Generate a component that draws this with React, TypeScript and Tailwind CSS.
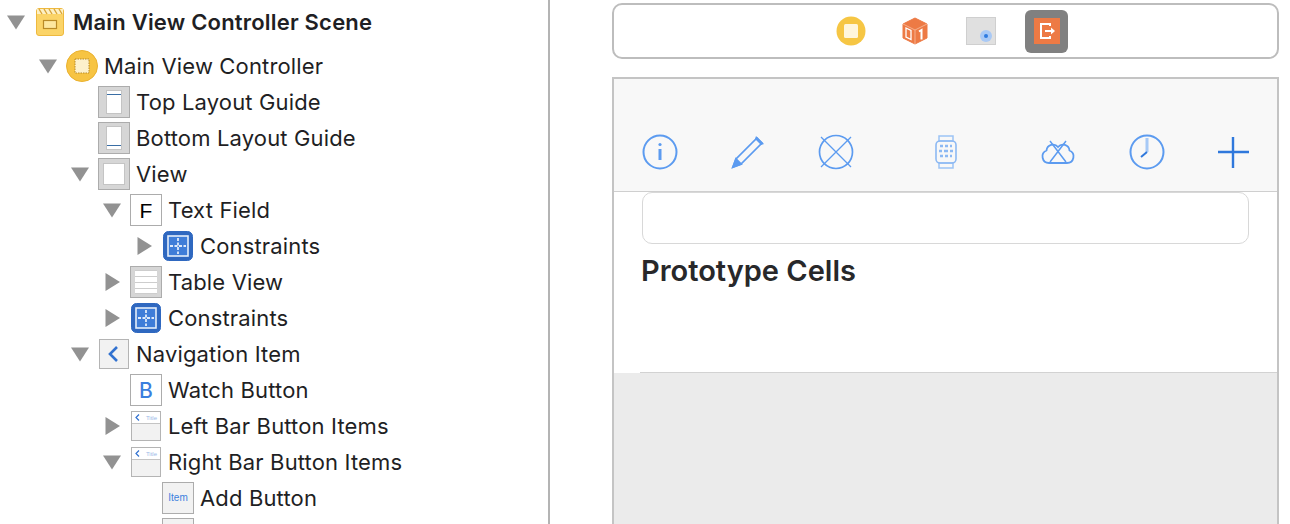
import type { ReactNode } from "react";

const boxClass = "flex h-8 w-8 items-center justify-center border border-[#acacac]";

function Triangle({ open }: { open: boolean }) {
	return (
		<svg width="18" height="18" viewBox="0 0 18 18" className="shrink-0">
			{open ? <path d="M0 2.5h18L9 16.5z" fill="#929292" /> : <path d="M2.5 0v18L17 9z" fill="#929292" />}
		</svg>
	);
}

function SceneIcon() {
	return (
		<svg width="28" height="28" viewBox="0 0 28 28">
			<rect x="0.5" y="0.5" width="27" height="27" rx="2.5" fill="#fbd468" stroke="#eeb93f" />
			<rect x="1" y="1" width="26" height="5" fill="#fdf0c4" />
			<path d="M3 1l3 5M8 1l3 5M13 1l3 5M18 1l3 5M23 1l3 5" stroke="#d9a53a" strokeWidth="1.4" />
			<rect x="7.5" y="12.5" width="13" height="8" fill="#fde79f" stroke="#b98a26" strokeWidth="1.2" />
		</svg>
	);
}

function ControllerIcon() {
	return (
		<svg width="32" height="32" viewBox="0 0 32 32">
			<circle cx="16" cy="16" r="15.5" fill="#f7c443" stroke="#eab12f" />
			<rect x="9" y="9" width="14" height="14" fill="#fdf1cc" stroke="#b98a26" strokeDasharray="1.5 1" />
		</svg>
	);
}

function SmallControllerIcon() {
	return (
		<svg width="30" height="30" viewBox="0 0 30 30">
			<circle cx="15" cy="15" r="14.5" fill="#f6c644" />
			<rect x="8" y="8" width="14" height="14" rx="1.5" fill="#fff6dc" />
		</svg>
	);
}

function GuideIcon({ bottom }: { bottom?: boolean }) {
	return (
		<div className={`${boxClass} bg-[#d6d6d6]`}>
			<svg width="16" height="24" viewBox="0 0 16 24">
				<rect x="0.5" y="0.5" width="15" height="23" fill="#ffffff" stroke="#c4c4c4" />
				<rect x="1" y={bottom ? 19 : 4} width="14" height="1" fill="#3a6ea5" />
			</svg>
		</div>
	);
}

function ViewIcon() {
	return (
		<div className={`${boxClass} bg-[#d6d6d6]`}>
			<div className="h-[22px] w-[22px] border border-[#c4c4c4] bg-white" />
		</div>
	);
}

function TextFieldIcon() {
	return (
		<div className={`${boxClass} bg-white font-['Liberation_Sans',sans-serif] text-[21px] leading-none text-black`}>F</div>
	);
}

function ConstraintsIcon() {
	return (
		<svg width="30" height="30" viewBox="0 0 30 30">
			<rect x="0.5" y="0.5" width="29" height="29" rx="5" fill="#2f68c0" stroke="#2f68c0" />
			<rect x="5" y="5" width="20" height="20" fill="#3f7dd8" stroke="#e4eefb" strokeWidth="1.6" />
			<path d="M15 7v16M7 15h16" stroke="#dfeafa" strokeWidth="1.8" strokeDasharray="3 1.5" />
		</svg>
	);
}

function TableIcon() {
	return (
		<div className={`${boxClass} bg-[#d6d6d6]`}>
			<svg width="22" height="24" viewBox="0 0 22 24">
				<rect width="22" height="24" fill="#ffffff" />
				<path d="M0 .5h22M0 6.5h22M0 12.5h22M0 18.5h22M0 23.5h22" stroke="#cdcdcd" />
			</svg>
		</div>
	);
}

function NavIcon() {
	return (
		<svg width="30" height="30" viewBox="0 0 30 30">
			<rect x="0.5" y="0.5" width="29" height="29" fill="#f2f2f2" stroke="#b4b4b4" />
			<path d="M18 8l-7 7 7 7" fill="none" stroke="#3272d0" strokeWidth="2.6" />
		</svg>
	);
}

function ButtonIcon() {
	return (
		<div className={`${boxClass} bg-white text-[21px] font-medium leading-none text-[#3b7fde]`}>B</div>
	);
}

function BarItemsIcon() {
	return (
		<div className="flex h-[30px] w-[30px] flex-col border border-[#b4b4b4] bg-[#f2f2f2]">
			<div className="flex h-[12px] items-center justify-between border-b border-[#c4c4c4] bg-white pl-[3px] pr-[3px] font-['Liberation_Sans',sans-serif] text-[6px] leading-none text-[#9bb9e8]">
				<svg width="5" height="7" viewBox="0 0 5 7">
					<path d="M4 .5L1 3.5l3 3" fill="none" stroke="#3272d0" strokeWidth="1.2" />
				</svg>
				<span>Title</span>
			</div>
		</div>
	);
}

function ItemIcon({ label }: { label?: string }) {
	return (
		<div className={`${boxClass} bg-[#f2f2f2] font-['Liberation_Sans',sans-serif] text-[10px] leading-none text-[#3b7fde]`}>
			{label}
		</div>
	);
}

interface ITreeRow {
	indent: string;
	open?: boolean;
	icon: ReactNode;
	label?: string;
}

const rows: ITreeRow[] = [
	{ indent: "pl-[39px]", open: true, icon: <ControllerIcon />, label: "Main View Controller" },
	{ indent: "pl-[71px]", icon: <GuideIcon />, label: "Top Layout Guide" },
	{ indent: "pl-[71px]", icon: <GuideIcon bottom />, label: "Bottom Layout Guide" },
	{ indent: "pl-[71px]", open: true, icon: <ViewIcon />, label: "View" },
	{ indent: "pl-[103px]", open: true, icon: <TextFieldIcon />, label: "Text Field" },
	{ indent: "pl-[135px]", open: false, icon: <ConstraintsIcon />, label: "Constraints" },
	{ indent: "pl-[103px]", open: false, icon: <TableIcon />, label: "Table View" },
	{ indent: "pl-[103px]", open: false, icon: <ConstraintsIcon />, label: "Constraints" },
	{ indent: "pl-[71px]", open: true, icon: <NavIcon />, label: "Navigation Item" },
	{ indent: "pl-[103px]", icon: <ButtonIcon />, label: "Watch Button" },
	{ indent: "pl-[103px]", open: false, icon: <BarItemsIcon />, label: "Left Bar Button Items" },
	{ indent: "pl-[103px]", open: true, icon: <BarItemsIcon />, label: "Right Bar Button Items" },
	{ indent: "pl-[135px]", icon: <ItemIcon label="Item" />, label: "Add Button" },
	{ indent: "pl-[135px]", icon: <ItemIcon /> },
];

function TreeRow({ indent, open, icon, label }: ITreeRow) {
	return (
		<div className={`flex h-9 shrink-0 items-center ${indent}`}>
			<div className="flex w-[27px] shrink-0 items-center">{open !== undefined && <Triangle open={open} />}</div>
			<div className="flex w-8 shrink-0 items-center justify-center">{icon}</div>
			<span className="ml-1.5 whitespace-nowrap text-[22px] leading-none tracking-[0.15px] text-[#1f1f24]">{label}</span>
		</div>
	);
}

function ToolbarIcon({ className, children }: { className: string; children: ReactNode }) {
	return (
		<svg
			width="36"
			height="36"
			viewBox="0 0 36 36"
			fill="none"
			stroke="#5c9bf0"
			strokeWidth="2"
			className={`shrink-0 ${className}`}
		>
			{children}
		</svg>
	);
}

function CubeIcon() {
	return (
		<svg width="28" height="28" viewBox="0 0 28 28">
			<path d="M14 1l12 6v14l-12 6-12-6V7z" fill="#ed7a45" stroke="#ed7a45" strokeLinejoin="round" />
			<path d="M2 7l12 6 12-6" fill="none" stroke="#f6b08e" strokeWidth="1" />
			<path d="M14 13v14" stroke="#f6b08e" strokeWidth="1" />
			<path d="M5 11l5 2.5v9L5 20z" fill="none" stroke="#ffffff" strokeWidth="1.3" />
			<path d="M18 14.5l2.5-1.5v9.5" fill="none" stroke="#ffffff" strokeWidth="2" />
		</svg>
	);
}

function ExitIcon() {
	return (
		<div className="flex h-[43px] w-[43px] items-center justify-center rounded-md bg-[#808080]">
			<svg width="26" height="26" viewBox="0 0 26 26">
				<rect width="26" height="26" fill="#ed7a45" />
				<path d="M16 8V6H7v14h9v-2" fill="none" stroke="#ffffff" strokeWidth="2" />
				<path d="M11 13h7" stroke="#ffffff" strokeWidth="2" />
				<path d="M17 9.5l4 3.5-4 3.5z" fill="#ffffff" />
			</svg>
		</div>
	);
}

export default function App() {
	return (
		<div className="flex h-[524px] w-[1290px] overflow-hidden bg-white font-['Inter',sans-serif]">
			<div className="flex w-[550px] shrink-0 flex-col border-r-2 border-[#b4b4b4] pt-1">
				<div className="mb-2 flex h-9 shrink-0 items-center pl-[7px]">
					<Triangle open />
					<div className="ml-[11px]">
						<SceneIcon />
					</div>
					<span className="ml-[9px] whitespace-nowrap text-[22px] font-semibold leading-none tracking-[0.2px] text-[#1f1f24]">
						Main View Controller Scene
					</span>
				</div>
				{rows.map((row, i) => (
					<TreeRow key={i} {...row} />
				))}
			</div>

			<div className="flex w-[729px] shrink-0 flex-col pl-[62px]">
				<div className="mt-[3px] flex h-[56px] shrink-0 items-center rounded-[10px] border-2 border-[#bdbdbd] pl-[222px]">
					<SmallControllerIcon />
					<div className="ml-[35px]">
						<CubeIcon />
					</div>
					<div className="relative ml-[37px] h-[28px] w-[30px] border border-[#cfcfcf] bg-[#e0e0e0]">
						<div className="absolute bottom-[2px] right-[3px] flex h-3 w-3 items-center justify-center rounded-full bg-[#a9c9f5]">
							<div className="h-1 w-1 rounded-full bg-[#2f7be0]" />
						</div>
					</div>
					<div className="ml-[29px]">
						<ExitIcon />
					</div>
				</div>

				<div className="mt-[18px] flex flex-1 flex-col border-x-2 border-t-2 border-[#c4c4c4]">
					<div className="flex h-[113px] shrink-0 items-end border-b border-[#cfcfcf] bg-[#f8f8f8] pb-[21px] pl-[28px]">
						<ToolbarIcon className="">
							<circle cx="18" cy="18" r="16.5" />
							<path d="M18 15v11" strokeWidth="3" />
							<circle cx="18" cy="10.5" r="1.6" fill="#5c9bf0" stroke="none" />
						</ToolbarIcon>
						<ToolbarIcon className="ml-[52px]">
							<path d="M3 33l3-8L27 4l5 5L11 30z" strokeWidth="1.7" />
							<path d="M3 33l3-8 5 5z" fill="#5c9bf0" />
							<path d="M26 2l8 8-3 1-6-6z" fill="#5c9bf0" stroke="none" />
						</ToolbarIcon>
						<ToolbarIcon className="ml-[52px]">
							<circle cx="18" cy="18" r="16.5" strokeWidth="1.7" />
							<path d="M3 3l30 30M33 3L3 33" strokeWidth="1.3" />
						</ToolbarIcon>
						<ToolbarIcon className="ml-[74px]">
							<rect x="11" y="2" width="14" height="5" strokeWidth="1.5" stroke="#9cc3f5" />
							<rect x="11" y="29" width="14" height="5" strokeWidth="1.5" stroke="#9cc3f5" />
							<rect x="8" y="7" width="20" height="22" rx="4" strokeWidth="1.6" stroke="#8db9f3" />
							<path
								d="M12 12h3M17 12h3M22 12h2M11 17h3M16 17h4M22 17h3M12 22h3M17 22h3M22 22h2"
								strokeWidth="2.4"
								stroke="#8db9f3"
							/>
						</ToolbarIcon>
						<ToolbarIcon className="ml-[76px]">
							<path
								d="M9 29a6.5 6.5 0 0 1-2.5-12.5A6.5 6.5 0 0 1 18 13a6.5 6.5 0 0 1 11.5 3.5A6.5 6.5 0 0 1 27 29z"
								strokeWidth="1.8"
							/>
							<path d="M10 7l16 21M26 7L10 28" strokeWidth="1.5" />
						</ToolbarIcon>
						<ToolbarIcon className="ml-[53px]">
							<circle cx="18" cy="18" r="16.5" />
							<path d="M18 4v14" stroke="#a6c9f6" strokeWidth="3" />
							<path d="M18 18l-6 5" strokeWidth="2" stroke="#2f78dc" />
						</ToolbarIcon>
						<ToolbarIcon className="ml-[50px]">
							<path d="M18 3v31M3 18h31" stroke="#2f78dc" strokeWidth="2.4" />
						</ToolbarIcon>
					</div>

					<div className="flex h-[180px] shrink-0 flex-col pl-[28px] pr-[28px]">
						<div className="h-[52px] shrink-0 rounded-[10px] border border-[#d8d8d8] bg-white" />
						<div className="-ml-px mt-[12px] whitespace-nowrap text-[29px] font-semibold leading-[30px] text-[#28282a]">
							Prototype Cells
						</div>
					</div>
					<div className="ml-[26px] h-px shrink-0 bg-[#d2d2d2]" />
					<div className="flex-1 bg-[#ebebeb]" />
				</div>
			</div>
		</div>
	);
}
